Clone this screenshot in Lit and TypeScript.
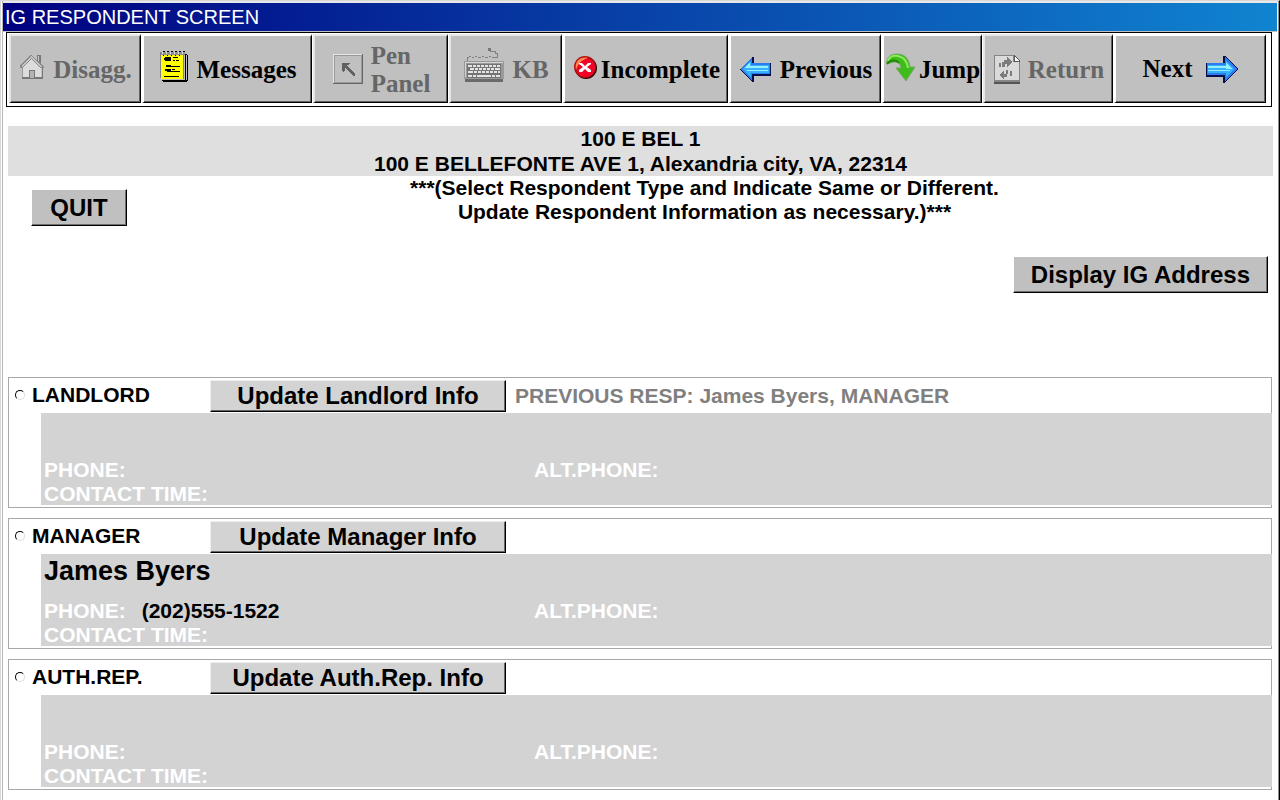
import { LitElement, html, css, svg, nothing } from "lit";
import { customElement, property } from "lit/decorators.js";

const icons: Record<string, unknown> = {
  house: svg`<svg width="25" height="32" viewBox="0 0 25 32" shape-rendering="crispEdges">
    <path d="M17 1h4v9h-4z" fill="#777"/><path d="M18 2h1v7h-1z" fill="#ccc"/>
    <path d="M3 12 11 4l10 9v11H3z" fill="#dcdcdc"/>
    <path d="M2 23h21v2H2z" fill="#777"/><path d="M22 13h1v11h-1z" fill="#777"/><path d="M2 12h1v11H2z" fill="#999"/>
    <path d="M0 11 11 1l13 11v2h-3L11 5 3 14H0z" fill="#8a8a8a"/><path d="M1 12 11 2l11 10-1 1L11 4l-9 9z" fill="#c8c8c8"/>
    <path d="M9 16h6v8H9z" fill="#777"/><path d="M10 17h4v7h-4z" fill="#b4b4b4"/></svg>`,
  note: svg`<svg width="29" height="38" viewBox="0 0 29 38" shape-rendering="crispEdges">
    <path d="M24 3h3v1h1v26h-1v1H3v-1H2v-2h22z" fill="#000"/><path d="M24 3h1v25h-1zM2 28h23v1H2zM26 4h1v25h-1z" fill="#c0c0c0"/>
    <path d="M0 1h24v27H1v-1H0z" fill="#808080"/><path d="M1 4h22v24H1z" fill="#ff0"/>
    <path d="M1 1h24v3H1z" fill="#909090"/>
    <path d="M3 0h2v1H3zM7 0h2v1H7zM11 0h2v1h-2zM15 0h2v1h-2zM19 0h2v1h-2zM23 0h2v1h-2zM3 4h1v1H3zM7 4h1v1H7zM11 4h1v1h-1zM15 4h1v1h-1zM19 4h1v1h-1z" fill="#000"/>
    <path d="M2 1h1v2H2zM6 1h1v2H6zM10 1h1v2h-1zM14 1h1v2h-1zM18 1h1v2h-1zM22 1h1v2h-1z" fill="#ddd"/>
    <path d="M5 6h6v1H5zM4 7h7v2H4zM13 6h5v1h-5zM5 9h6v1H5zM13 9h2v1h-2zM16 9h3v1h-3zM6 14h5v2H6zM11 15h9v1h-9zM5 18h6v2H5zM12 18h3v1h-3zM7 20h4v1H7zM11 20h9v1h-9zM4 25h15v1H4z" fill="#000"/></svg>`,
  pen: svg`<svg width="30" height="32" viewBox="0 0 30 32" shape-rendering="crispEdges">
    <path d="M0 0h30v30H0z" fill="#666"/><path d="M0 0h29v29H0z" fill="#e6e6e6"/><path d="M1 1h28v28H1z" fill="#999"/><path d="M2 2h26v26H2z" fill="#c0c0c0"/>
    <path d="M9 9h8v1h-1v1h-2v1l8 8v2h-2l-8-8v3h-1v1h-1v-1H9z" fill="#606060"/></svg>`,
  keyboard: svg`<svg width="40" height="46" viewBox="0 0 40 46" shape-rendering="crispEdges">
    <path d="M3 14v-4h2M5 9.500h2m1 1h2m1-1h2m1 1h3m1-1h2m1 1h3m1-1h2m1 1h5V6h-2V4h-5V3" fill="none" stroke="#808080"/>
    <path d="M24 1h3v3h-3z" fill="#777"/>
    <path d="M0 14h40v18H0z" fill="#9a9a9a"/><path d="M1 15h38v1H1zM1 15h1v15H1z" fill="#d4d4d4"/><path d="M1 32h38v3H1z" fill="#6a6a6a"/>
    <path d="M3 17h34v14H3z" fill="#747474"/>
    <path d="M4 18h32v2H4zM6 21h30v2H6zM4 24h32v2H4zM4 28h32v2H4z" fill="#e4e4e4"/>
    <path d="M8 18h1v2H8zM12 18h1v2h-1zM16 18h1v2h-1zM20 18h1v2h-1zM24 18h1v2h-1zM28 18h1v2h-1zM32 18h1v2h-1zM10 21h1v2h-1zM14 21h1v2h-1zM18 21h1v2h-1zM22 21h1v2h-1zM26 21h1v2h-1zM30 21h1v2h-1zM9 24h1v2H9zM13 24h1v2h-1zM17 24h1v2h-1zM21 24h1v2h-1zM25 24h1v2h-1zM29 24h1v2h-1zM33 24h1v2h-1zM8 28h1v2H8zM12 28h1v2h-1zM27 28h1v2h-1zM31 28h1v2h-1z" fill="#747474"/></svg>`,
  error: svg`<svg width="25" height="30" viewBox="0 0 25 30">
    <circle cx="13" cy="13" r="11" fill="#300"/><circle cx="12" cy="12" r="11" fill="#b01010"/><circle cx="12.500" cy="12.500" r="9.500" fill="#f00528"/>
    <path d="M3 15C1 7 7 1 15 3 8 5 5 9 3 15z" fill="#ff8a50"/>
    <path d="M6 8h3l3 3 3-3h3v1l-4 3 4 3v2h-3l-3-3-3 3H6v-2l4-3-4-3z" fill="#fff"/></svg>`,
  left: svg`<svg width="32" height="27" viewBox="0 0 32 27" shape-rendering="crispEdges">
    <path d="M0 13 12 1h2v6h17v13H14v6h-2z" fill="#06104c"/>
    <path d="M0 13 12 1v6h18v11H12v6z" fill="#2a7cf0"/>
    <path d="M2 13 11 4v5h18v8H11v4z" fill="#35b0ff"/>
    <path d="M4 12 10 6v4h18v2zM7 14h21v1H7z" fill="#94f0ff"/></svg>`,
  right: svg`<svg width="32" height="27" viewBox="0 0 32 27" shape-rendering="crispEdges">
    <path d="M0 7h17V0h2l13 13-13 14h-2v-6H0z" fill="#06104c"/>
    <path d="M1 7h18V1l12 12-12 12v-6H1z" fill="#2a7cf0"/>
    <path d="M2 9h18V5l9 8-9 8v-4H2z" fill="#35b0ff"/>
    <path d="M2 10h18V7l7 6h-7v-1H2zM2 14h22v1H2z" fill="#94f0ff"/></svg>`,
  jump: svg`<svg width="30" height="33" viewBox="0 0 30 33">
    <path d="M1 11C0 4 5 1 11 1c8 0 12 5 13 13h5L20 28 10 15h5C14 9 11 7 1 11z" fill="#3fbc1c" stroke="#79a866" stroke-width="1"/>
    <path d="M2 8C3 4 7 2 12 3c6 1 9 5 10 12" fill="none" stroke="#8bea5c" stroke-width="2"/>
    <path d="M1 11c3-4 9-5 12-1" fill="none" stroke="#1f8a08" stroke-width="2"/></svg>`,
  page: svg`<svg width="26" height="32" viewBox="0 0 26 32" shape-rendering="crispEdges">
    <path d="M0 1h20l6 6v22H0z" fill="#858585"/><path d="M1 2h18v6h6v18H1z" fill="#dadada"/>
    <path d="M0 28h26v2H0z" fill="#555"/><path d="M20 1l6 6h-6z" fill="#fff" stroke="#555"/>
    <path d="M5 9h2v4H5zM8 8h3v5H8zM10 6h3V3l6 5-6 5v-3h-3zM16 17h2v5h-2zM12 16h2v4h-2zM13 20h-3v-4l-5 5 5 5v-3h3z" fill="#7c7c7c"/></svg>`,
};

@customElement("tool-button")
class ToolButton extends LitElement {
  @property() icon = "";
  @property() label = "";
  @property({ type: Boolean }) disabled = false;
  @property({ type: Boolean }) trailing = false;

  static styles = css`
    :host { display: flex; min-width: 0; }
    button {
      flex: 1; min-width: 0; display: flex; align-items: center; justify-content: center;
      gap: 8px; height: 69px; margin: 0; padding: 1px 0 0 1px;
      border-style: solid; border-width: 2px 1px 1px 2px; border-color: #fff #000 #000 #fff;
      box-shadow: inset -1px -1px #606060; border-radius: 0; background: #c0c0c0; color: #000;
      font: bold 25px/28px "Liberation Serif", "Times New Roman", serif; text-align: left;
    }
    button:disabled { color: #666; border-top-color: #e6e6e6; border-left-color: #e6e6e6; }
    :host([tight]) button { gap: 3px; }
    .wide { gap: 14px; padding: 0; }
    .label { white-space: pre-line; }
    svg { display: block; flex: none; }
  `;

  render() {
    const text = html`<span class="label">${this.label}</span>`;
    return html`<button type="button" class=${this.trailing ? "wide" : ""} ?disabled=${this.disabled}>
      ${this.trailing ? html`${text}${icons[this.icon]}` : html`${icons[this.icon]}${text}`}
    </button>`;
  }
}

@customElement("respondent-row")
class RespondentRow extends LitElement {
  @property() type = "";
  @property() action = "";
  @property() previous = "";
  @property() name = "";
  @property() phone = "";

  static styles = css`
    :host { display: block; border: 1px solid #a8a8a8; padding-bottom: 2px; font-size: 21px; line-height: 24px; font-weight: bold; }
    .head { display: grid; grid-template-columns: 201px 296px 1fr; align-items: center; height: 35px; }
    .choice { display: flex; align-items: center; gap: 7px; padding: 0 0 2px 6px; }
    input {
      appearance: none; width: 10px; height: 10px; margin: 0; border-radius: 50%;
      border: 1px solid; border-color: #000 #ddd #ddd #000; background: #fff;
    }
    input:checked { background: radial-gradient(#000 0 2px, #fff 3px); }
    button {
      height: 32px; padding: 0; margin: 0; white-space: nowrap;
      border-style: solid; border-width: 1px; border-color: #eee #000 #000 #eee; border-radius: 0;
      box-shadow: inset -1px -1px #666; background: #d3d3d3; color: #000;
      font: bold 24px/28px "Liberation Sans", Arial, sans-serif;
    }
    .prev { padding-left: 9px; color: #808080; }
    .panel {
      display: grid; grid-template-columns: 490px 1fr; grid-template-rows: 44px 24px 24px;
      margin: 0 -1px 0 32px; padding-left: 3px; background: #d3d3d3; color: #fff; line-height: 26px;
    }
    .name { grid-column: 1 / -1; font-size: 27px; line-height: 34px; color: #000; }
    .phone { display: flex; gap: 16px; }
    .value { color: #000; }
  `;

  render() {
    return html`
      <div class="head">
        <div class="choice"><input type="radio" id="pick" name="respondent" /><label for="pick">${this.type}</label></div>
        <button type="button">${this.action}</button>
        ${this.previous ? html`<div class="prev">${this.previous}</div>` : nothing}
      </div>
      <div class="panel">
        <div class="name">${this.name}</div>
        <div class="phone"><span>PHONE:</span><span class="value">${this.phone}</span></div>
        <div>ALT.PHONE:</div>
        <div>CONTACT TIME:</div>
      </div>`;
  }
}

@customElement("app-root")
class AppRoot extends LitElement {
  static styles = css`
    :host { display: block; font-family: "Liberation Sans", Arial, sans-serif; color: #000; background: #fff; }
    .window {
      box-sizing: border-box; min-height: 100vh; padding: 2px 2px 0 2px;
      border: 1px solid #d8d8d8; border-right-color: #000; border-bottom: 0;
      box-shadow: inset 1px 0 #fff, inset 2px 0 #b8b8b8, inset -1px 0 #909090, inset 0 2px #e8e8e8;
    }
    h1 {
      margin: 0; padding-left: 2px; height: 28px; font-size: 20px; line-height: 28px; font-weight: normal; color: #fff;
      background: linear-gradient(to right, #000080, #1084d0); border-bottom: 1px solid #c0c0c0;
    }
    nav {
      display: grid; grid-template-columns: 132fr 170fr 135fr 113fr 165fr 152fr 100fr 130fr 152fr;
      column-gap: 1px; margin: 0 5px 0 3px; padding: 1px 5px 3px 2px; border: 1px solid #000;
    }
    main { padding: 19px 4px 10px 5px; }
    .address {
      background: #dfdfdf; text-align: center; font-size: 21px; line-height: 25px; font-weight: bold;
    }
    .intro { display: grid; grid-template-columns: 128px 1fr; align-items: start; height: 80px; }
    .intro p { margin: 0; text-align: center; font-size: 21px; line-height: 24px; font-weight: bold; }
    .box {
      height: 37px; padding: 0 17px; border-style: solid; border-width: 1px; border-color: #fff #000 #000 #fff;
      box-shadow: inset -1px -1px #707070; border-radius: 0; background: #c0c0c0; color: #000;
      font: bold 24px/28px "Liberation Sans", Arial, sans-serif;
    }
    .quit { margin: 13px 9px 0 23px; padding: 0; }
    .display { display: flex; justify-content: flex-end; padding-right: 5px; }
    .rows { display: grid; gap: 10px; margin: 84px 1px 0 0; }
  `;

  render() {
    return html`
      <div class="window">
        <h1>IG RESPONDENT SCREEN</h1>
        <nav>
          <tool-button icon="house" label="Disagg." disabled></tool-button>
          <tool-button icon="note" label="Messages"></tool-button>
          <tool-button icon="pen" .label=${"Pen\nPanel"} disabled></tool-button>
          <tool-button icon="keyboard" label="KB" disabled></tool-button>
          <tool-button icon="error" label="Incomplete" tight></tool-button>
          <tool-button icon="left" label="Previous"></tool-button>
          <tool-button icon="jump" label="Jump" tight></tool-button>
          <tool-button icon="page" label="Return" disabled></tool-button>
          <tool-button icon="right" label="Next" trailing></tool-button>
        </nav>
        <main>
          <div class="address">
            <div>100 E BEL 1</div>
            <div>100 E BELLEFONTE AVE 1, Alexandria city, VA, 22314</div>
          </div>
          <div class="intro">
            <button type="button" class="box quit">QUIT</button>
            <p>***(Select Respondent Type and Indicate Same or Different.<br />Update Respondent Information as necessary.)***</p>
          </div>
          <div class="display"><button type="button" class="box">Display IG Address</button></div>
          <div class="rows">
            <respondent-row type="LANDLORD" action="Update Landlord Info" previous="PREVIOUS RESP: James Byers, MANAGER"></respondent-row>
            <respondent-row type="MANAGER" action="Update Manager Info" name="James Byers" phone="(202)555-1522"></respondent-row>
            <respondent-row type="AUTH.REP." action="Update Auth.Rep. Info"></respondent-row>
          </div>
        </main>
      </div>`;
  }
}
